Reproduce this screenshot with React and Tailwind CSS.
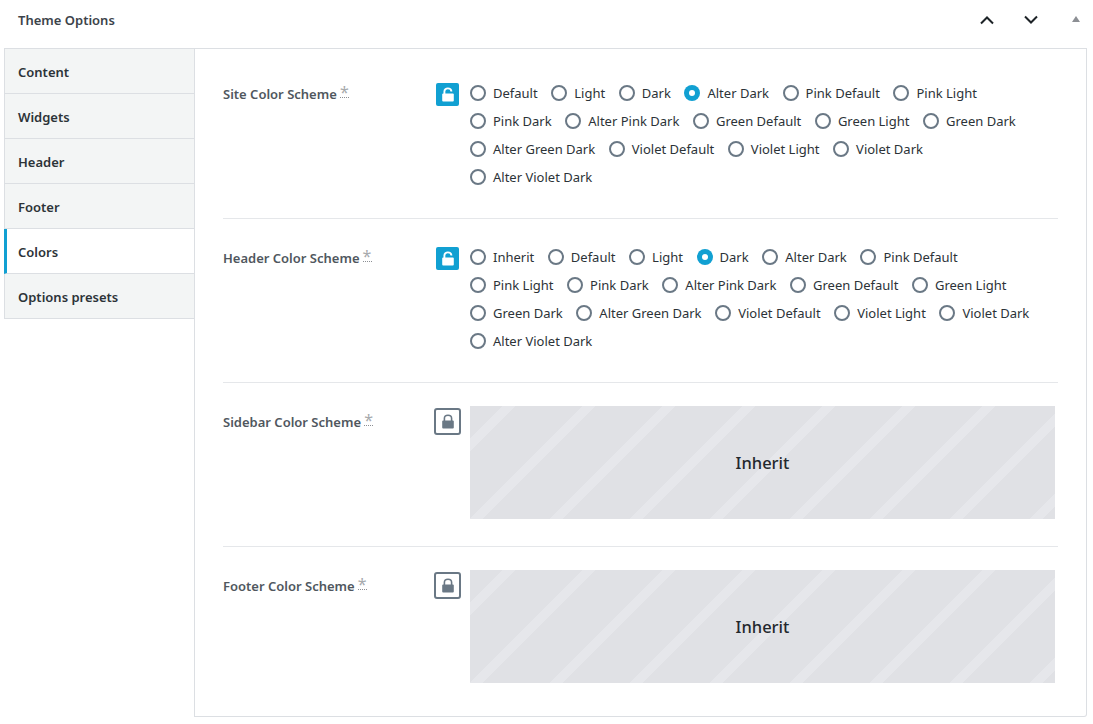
import React from "react";

const schemes1 = ["Default","Light","Dark","Alter Dark","Pink Default","Pink Light","Pink Dark","Alter Pink Dark","Green Default","Green Light","Green Dark","Alter Green Dark","Violet Default","Violet Light","Violet Dark","Alter Violet Dark"];
const schemes2 = ["Inherit", ...schemes1];
const tabs = ["Content","Widgets","Header","Footer","Colors","Options presets"];

function LockIcon({ open, color }) {
  return (
    <svg width="14" height="15" viewBox="0 0 14 15">
      <rect x="1.2" y="6.5" width="11.6" height="8" rx="1" fill={color} />
      {open ? (
        <path d="M3.4 7V4.4C3.4 2.6 4.9 1.4 6.9 1.4S10.4 2.6 10.4 4.4" fill="none" stroke={color} strokeWidth="1.9" />
      ) : (
        <path d="M3.4 7V4.4C3.4 2.4 5 1.2 7 1.2S10.6 2.4 10.6 4.4V7" fill="none" stroke={color} strokeWidth="1.6" />
      )}
    </svg>
  );
}

function Label({ children }) {
  return (
    <div className="w-[213px] shrink-0 flex items-start text-[13px] leading-[20px] font-semibold text-[#50575e] pt-[5px]">
      <span>{children}</span>
      <span className="ml-[3px] w-[9px] h-[15px] text-center mt-[-1px] text-[16px] leading-[18px] font-normal text-[#a7aaad] border-b border-dotted border-[#8c8f94]">*</span>
    </div>
  );
}

function Radios({ items, checked }) {
  return (
    <div className="flex flex-wrap w-[585px] ml-[11px]">
      {items.map((s) => (
        <label key={s} className="flex items-center h-[28px] mr-[13.6px] text-[13px] text-[#2c3338]">
          {s === checked ? (
            <span className="w-[16px] h-[16px] rounded-full bg-[#11a0d2] flex items-center justify-center mr-[7px]">
              <span className="w-[6px] h-[6px] rounded-full bg-white" />
            </span>
          ) : (
            <span className="w-[16px] h-[16px] rounded-full border-2 border-[#6a7885] bg-white mr-[7px]" />
          )}
          <span className="pt-[2px]">{s}</span>
        </label>
      ))}
    </div>
  );
}

function UnlockedRow({ title, items, checked }) {
  return (
    <div className="flex pt-[24px] pb-[27px] border-b border-[#e5e7ea]">
      <Label>{title}</Label>
      <div className="flex">
        <div className="w-[23px] h-[23px] mt-[4px] rounded-[2px] bg-[#11a0d2] flex items-center justify-center">
          <LockIcon open color="#ffffff" />
        </div>
        <Radios items={items} checked={checked} />
      </div>
    </div>
  );
}

function LockedRow({ title, last }) {
  return (
    <div className={last ? "flex pt-[23px] pb-[33px]" : "flex pt-[23px] pb-[27px] border-b border-[#e5e7ea]"}>
      <div className="pt-[1px]"><Label>{title}</Label></div>
      <div className="flex">
        <div className="w-[27px] h-[27px] -ml-[2px] mt-[2px] rounded-[3px] border-2 border-[#6a7885] flex items-center justify-center">
          <LockIcon color="#6a7885" />
        </div>
        <div className="w-[585px] h-[113px] ml-[9px] pt-[1px] flex items-center justify-center text-[16.5px] font-medium text-[#23282d] bg-[#e0e1e5] bg-[repeating-linear-gradient(135deg,transparent_0,transparent_23.3px,#e6e7eb_23.3px,#e6e7eb_32.3px,transparent_32.3px,transparent_56.57px)]">
          Inherit
        </div>
      </div>
    </div>
  );
}

export default function App() {
  return (
    <div className="min-h-[724px] bg-white pl-[4px] pr-[6px] font-['Noto_Sans',sans-serif]">
      <header className="h-[40px] mb-[8px] flex items-center pl-[14px]">
        <span className="text-[13px] font-semibold text-[#3c434a] pt-[1px]">Theme Options</span>
        <div className="ml-auto flex items-center">
          <svg width="16" height="10" viewBox="0 0 16 10" className="mr-[28px]">
            <path d="M2 8.5L8 2.5L14 8.5" fill="none" stroke="#1d2327" strokeWidth="2" />
          </svg>
          <svg width="16" height="10" viewBox="0 0 16 10" className="mr-[33px]">
            <path d="M2 1.5L8 7.5L14 1.5" fill="none" stroke="#1d2327" strokeWidth="2" />
          </svg>
          <svg width="8" height="6" viewBox="0 0 8 6" className="mr-[7px] -mt-[3px]">
            <path d="M4 0L8 6H0Z" fill="#8c8f94" />
          </svg>
        </div>
      </header>
      <div className="flex">
        <aside className="w-[191px] shrink-0 border-t border-r border-[#dcdfe3]">
          {tabs.map((t) => (
            <div
              key={t}
              className={
                t === "Colors"
                  ? "h-[45px] flex items-center pt-[3px] pl-[11px] border-l-[3px] border-l-[#11a0d2] border-b border-b-[#dcdfe3] bg-white text-[13px] font-semibold text-[#2c3338]"
                  : "h-[45px] flex items-center pt-[3px] pl-[13px] border-l border-b border-[#dcdfe3] bg-[#f3f5f5] text-[13px] font-semibold text-[#2c3338]"
              }
            >
              {t}
            </div>
          ))}
        </aside>
        <main className="flex-1 border-t border-r border-b border-[#dcdfe3] px-[28px] pt-[6px] rounded-br-[3px]">
          <UnlockedRow title="Site Color Scheme" items={schemes1} checked="Alter Dark" />
          <UnlockedRow title="Header Color Scheme" items={schemes2} checked="Dark" />
          <LockedRow title="Sidebar Color Scheme" />
          <LockedRow title="Footer Color Scheme" last />
        </main>
      </div>
    </div>
  );
}
